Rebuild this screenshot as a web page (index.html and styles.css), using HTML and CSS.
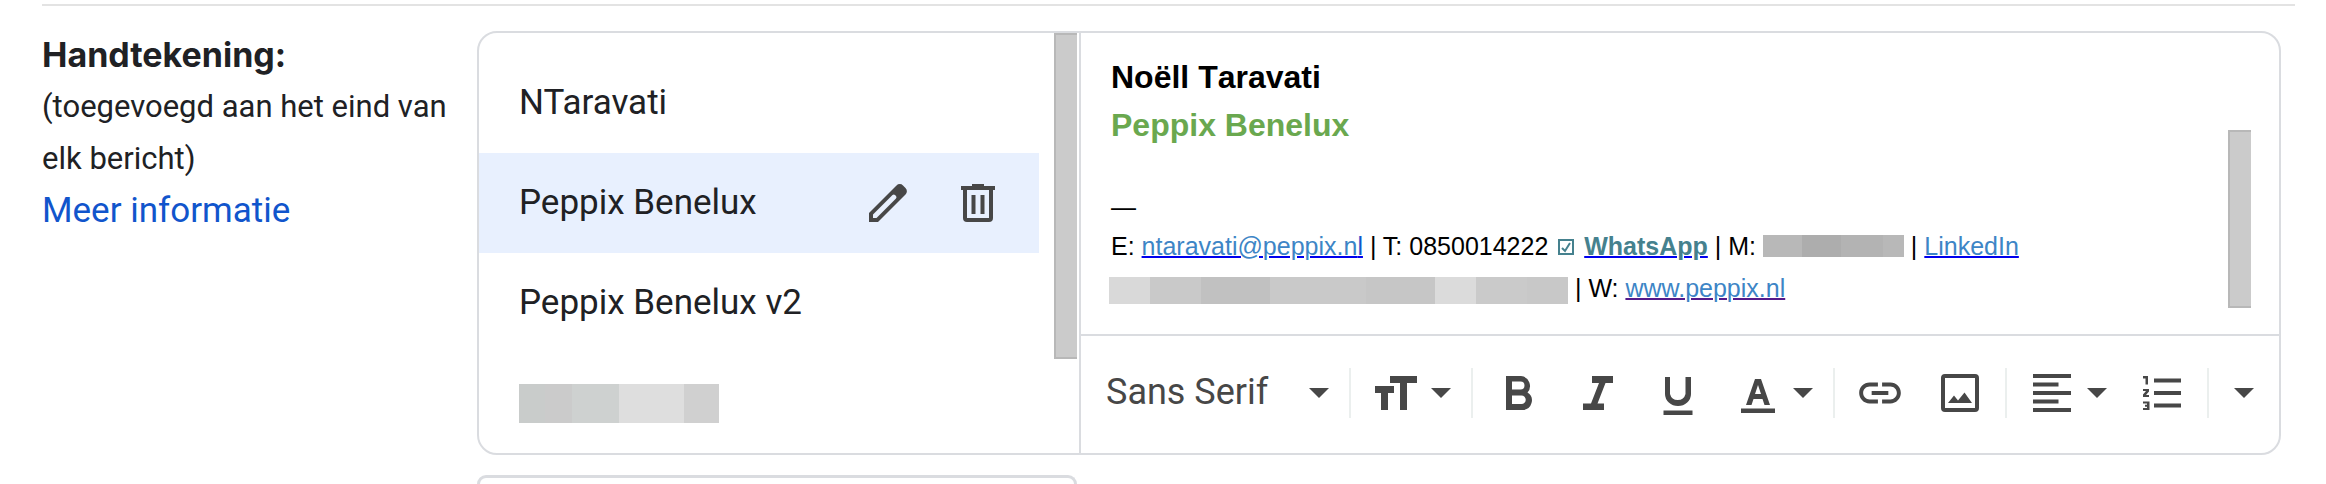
FILE: index.html
```html
<!DOCTYPE html>
<html lang="nl">
<head>
  <meta charset="UTF-8" />
  <title>Handtekening</title>
  <link rel="stylesheet" href="styles.css">
</head>
<body>
  <div class="settings">
    <div class="setting-row">
      <div class="setting-label">
        <div class="label-title">Handtekening:</div>
        <div class="label-note">(toegevoegd aan het eind van elk bericht)</div>
        <a class="label-link" href="#">Meer informatie</a>
      </div>

      <div class="setting-value">
        <div class="signature-box">
          <div class="list-panel">
            <ul class="signature-list">
              <li class="item"><span class="item-name">NTaravati</span></li>
              <li class="item selected">
                <span class="item-name">Peppix Benelux</span>
                <button class="icon-btn" aria-label="Bewerken">
                  <svg class="icon" viewBox="0 0 50 50"><path fill-rule="evenodd" d="M6 44V35L33.500 7.500a4.500 4.500 0 0 1 6.500 0l2.500 2.500a4.500 4.500 0 0 1 0 6.500L15 44zM10 40h3.500L33 20.500a2 2 0 0 0 0-2.500l-1-1a2 2 0 0 0-2.500 0L10 36.500z"/></svg>
                </button>
                <button class="icon-btn" aria-label="Verwijderen">
                  <svg class="icon" viewBox="0 0 50 50"><path fill-rule="evenodd" d="M8 8h11V6h12v2h11v4h-2v28a4 4 0 0 1-4 4H14a4 4 0 0 1-4-4V12H8zM14 12v28h22V12zM18.500 17h4v19h-4zM27.500 17h4v19h-4z"/></svg>
                </button>
              </li>
              <li class="item"><span class="item-name">Peppix Benelux v2</span></li>
              <li class="item"><span class="redacted redacted-name"></span></li>
            </ul>
            <div class="thumb list-thumb"></div>
          </div>

          <div class="editor">
            <div class="editor-body">
              <div class="signature">
                <div class="sig-name">Noëll Taravati</div>
                <div class="sig-company">Peppix Benelux</div>
                <div class="sig-dash">—</div>
                <div class="sig-line">E: <a class="mail" href="#">ntaravati@peppix.n<span class="mail-end">l</span></a> | T: 0850014222 <svg class="check" viewBox="0 0 16 16"><path d="M1 1h14v14H1z"/><path d="M4 9l3 3 5-8"/></svg> <a class="whatsapp" href="#">WhatsApp</a> | M: <span class="redacted redacted-phone"></span> | <a href="#">LinkedIn</a></div>
                <div class="sig-line"><span class="redacted redacted-address"></span> | W: <a class="visited" href="#">www.peppix.nl</a></div>
              </div>
              <div class="thumb editor-thumb"></div>
            </div>

            <div class="toolbar">
              <div class="font-picker">
                <select class="font-select" aria-label="Lettertype">
                  <option>Sans Serif</option>
                </select>
                <svg class="caret" viewBox="0 0 20 10"><path d="M0 0h20L10 10z"/></svg>
              </div>
              <div class="group">
                <button class="menu-btn" aria-label="Grootte">
                  <svg class="icon" viewBox="0 0 50 50"><path d="M19 8h27v7H36v27h-7V15H19zM4 18h19v7h-6v17h-7V25H4z"/></svg>
                  <svg class="caret" viewBox="0 0 20 10"><path d="M0 0h20L10 10z"/></svg>
                </button>
              </div>
              <div class="group">
                <button class="icon-btn" aria-label="Vet">
                  <svg class="icon" viewBox="0 0 50 50"><path fill-rule="evenodd" d="M13 8h15a10 10 0 0 1 6.500 16.500A9.500 9.500 0 0 1 29.500 42H13zM19 13.500v8h8.500a4 4 0 0 0 0-8zM19 27.500v8.500h9.500a4.250 4.250 0 0 0 0-8.500z"/></svg>
                </button>
                <button class="icon-btn" aria-label="Cursief">
                  <svg class="icon" viewBox="0 0 50 50"><path d="M19 8h21v7h-7.500L24.500 35.500H31V42H10v-6.500h8L26 15h-7z"/></svg>
                </button>
                <button class="icon-btn" aria-label="Onderstrepen">
                  <svg class="icon" viewBox="0 0 50 50"><path d="M12 9h5v17a8 8 0 0 0 15.500 0V9h5.500v17a13 12 0 0 1-26 0zM10.500 42.500h29v4.500h-29z"/></svg>
                </button>
                <button class="menu-btn" aria-label="Tekstkleur">
                  <svg class="icon" viewBox="0 0 50 50"><path fill-rule="evenodd" d="M22 11h6l9 26h-5.500l-2-6h-9l-2 6H13zM22 26h6l-3-9zM8 40.500h34v4.500H8z"/></svg>
                  <svg class="caret" viewBox="0 0 20 10"><path d="M0 0h20L10 10z"/></svg>
                </button>
              </div>
              <div class="group">
                <button class="icon-btn" aria-label="Link">
                  <svg class="icon" viewBox="0 0 24 24"><path d="M3.900 12c0-1.710 1.390-3.100 3.100-3.100h4V7H7c-2.760 0-5 2.240-5 5s2.240 5 5 5h4v-1.900H7c-1.710 0-3.100-1.390-3.100-3.100zM8 13h8v-2H8v2zm9-6h-4v1.900h4c1.710 0 3.100 1.390 3.100 3.100s-1.390 3.100-3.100 3.100h-4V17h4c2.760 0 5-2.240 5-5s-2.240-5-5-5z"/></svg>
                </button>
                <button class="icon-btn" aria-label="Afbeelding">
                  <svg class="icon" viewBox="0 0 50 50"><path fill-rule="evenodd" d="M10 6h30a4 4 0 0 1 4 4v30a4 4 0 0 1-4 4H10a4 4 0 0 1-4-4V10a4 4 0 0 1 4-4zM10 10v30h30V10zM13 35l6-7.500 4 5 6.500-8L37 35z"/></svg>
                </button>
              </div>
              <div class="group">
                <button class="menu-btn" aria-label="Uitlijnen">
                  <svg class="icon" viewBox="0 0 50 50"><path d="M6 6h38v4H6zM6 14.500h25.500v4H6zM6 23h38v4H6zM6 31.500h25.500v4H6zM6 40h38v4H6z"/></svg>
                  <svg class="caret" viewBox="0 0 20 10"><path d="M0 0h20L10 10z"/></svg>
                </button>
                <button class="icon-btn" aria-label="Genummerde lijst">
                  <svg class="icon" viewBox="0 0 50 50"><path d="M17 10.500h27v4H17zM17 23h27v4H17zM17 35.500h27v4H17z"/><path d="M6 8h5v8.500H8.500v-6H6zM6 21h6v2.500l-3 3.500H12v2H6v-2.500L9 23H6zM6 33.500h6.500V42H6v-2h4v-1.300H8v-2h2v-1.200H6z"/></svg>
                </button>
              </div>
              <div class="group">
                <button class="more-btn" aria-label="Meer opties">
                  <svg class="caret" viewBox="0 0 20 10"><path d="M0 0h20L10 10z"/></svg>
                </button>
              </div>
            </div>
          </div>
        </div>

        <button class="create-btn" aria-label="Nieuwe maken"></button>
      </div>
    </div>
  </div>
</body>
</html>
```
FILE: styles.css
```css
body {
  margin: 0;
  background-color: #fff;
  color: #202124;
  font-family: Roboto, sans-serif;
  font-size: 35px;
}

.settings {
  padding: 4px 31px 0 42px;
}

.setting-row {
  display: grid;
  grid-template-columns: 435px 1fr;
  border-top: 2px solid #e3e3e3;
  padding: 23px 14px 0 0;
}

.setting-label {
  line-height: 52px;
  padding-right: 20px;
}

.label-title {
  font-family: Inter, sans-serif;
  font-size: 34px;
  font-weight: 700;
}

.label-note {
  font-size: 31px;
}

.label-link {
  color: #1155cc;
  text-decoration: none;
}

.setting-value {
  padding-top: 2px;
}

.signature-box {
  display: grid;
  grid-template-columns: 600px 1fr;
  border: 2px solid #dadce0;
  border-radius: 20px;
  overflow: hidden;
}

.list-panel {
  display: flex;
}

.signature-list {
  list-style: none;
  margin: 0;
  padding: 20px 0 0;
  flex: 1;
}

.item {
  display: flex;
  align-items: center;
  gap: 40px;
  height: 100px;
  padding: 0 36px 0 40px;
  box-sizing: border-box;
}

.item.selected {
  background-color: #e8f0fe;
}

.item-name {
  flex: 1;
  padding-bottom: 2px;
}

.thumb {
  width: 23px;
  box-sizing: border-box;
  background-color: #cbcbcb;
  border: 2px solid #b8b8b8;
  border-right: none;
}

.list-thumb {
  height: 326px;
  margin: 0 2px 0 15px;
}

button {
  background: none;
  border: none;
  padding: 0;
  margin: 0;
  cursor: pointer;
}

.icon {
  display: block;
  width: 50px;
  height: 50px;
  fill: #474747;
}

.caret {
  display: block;
  width: 20px;
  height: 10px;
  fill: #474747;
}

.editor {
  display: flex;
  flex-direction: column;
  border-left: 2px solid #dadce0;
}

.editor-body {
  display: flex;
  justify-content: space-between;
  align-items: flex-end;
  flex: 1;
  padding: 20px 28px 0 30px;
}

.signature {
  align-self: flex-start;
  color: #000;
  font-family: "Liberation Sans", Arial, sans-serif;
  font-size: 25px;
  line-height: 42px;
}

.sig-name,
.sig-company {
  font-size: 32px;
  font-weight: bold;
  line-height: 48px;
  font-kerning: none;
}

.sig-company {
  color: #6aa84f;
}

.sig-dash {
  padding-top: 40px;
  line-height: 36px;
}

.signature a {
  color: #3d85c6;
  text-decoration-color: #0000ee;
  text-decoration-thickness: 2px;
}

.signature .mail-end {
  color: #1155cc;
}

.signature .whatsapp {
  color: #45818e;
  font-weight: bold;
}

.signature .visited {
  text-decoration-color: #551a8b;
}

.check {
  width: 16px;
  height: 16px;
  margin: 0 3px;
  fill: none;
  stroke: #45818e;
  stroke-width: 2;
}

.redacted {
  display: inline-block;
}

.redacted-name {
  width: 200px;
  height: 39px;
  background: linear-gradient(to right, #c9cccb 26px, #cbcbcb 26px 53px, #ced1d0 53px 100px, #dedede 100px 165px, #d0d0d0 165px);
}

.redacted-phone {
  width: 141px;
  height: 22px;
  vertical-align: -2px;
  background: linear-gradient(to right, #b8b8b8 39px, #adadad 39px 78px, #b3b3b3 78px 120px, #b8b8b8 120px);
}

.redacted-address {
  width: 459px;
  height: 27px;
  margin-left: -2px;
  vertical-align: -7px;
  background: linear-gradient(to right, #d9d9d9 41px, #c9c9c9 41px 92px, #c1c1c1 92px 161px, #c9c9c9 161px 257px, #c6c6c6 257px 326px, #dbdbdb 326px 367px, #cacaca 367px 418px, #c8c8c8 418px);
}

.editor-thumb {
  height: 178px;
  margin-bottom: 26px;
}

.toolbar {
  display: flex;
  gap: 20px;
  border-top: 2px solid #dadce0;
  padding: 32px 20px 35px 25px;
}

.font-picker {
  display: grid;
  flex: 1;
  align-items: center;
}

.font-select,
.font-picker .caret {
  grid-area: 1 / 1;
}

.font-picker .caret {
  justify-self: end;
  pointer-events: none;
}

.font-select {
  appearance: none;
  border: none;
  background: none;
  padding: 0 0 3px;
  color: #474747;
  font-family: Roboto, sans-serif;
  font-size: 36px;
}

.group {
  display: flex;
  gap: 30px;
  border-left: 2px solid #ebefee;
  padding-left: 20px;
}

.menu-btn {
  display: flex;
  align-items: center;
  gap: 10px;
}

.more-btn {
  padding: 0 5px;
}

.create-btn {
  display: block;
  box-sizing: border-box;
  width: 600px;
  height: 9px;
  margin-top: 20px;
  border: 3px solid #dadce0;
  border-bottom: none;
  border-radius: 9px 9px 0 0;
}
```
